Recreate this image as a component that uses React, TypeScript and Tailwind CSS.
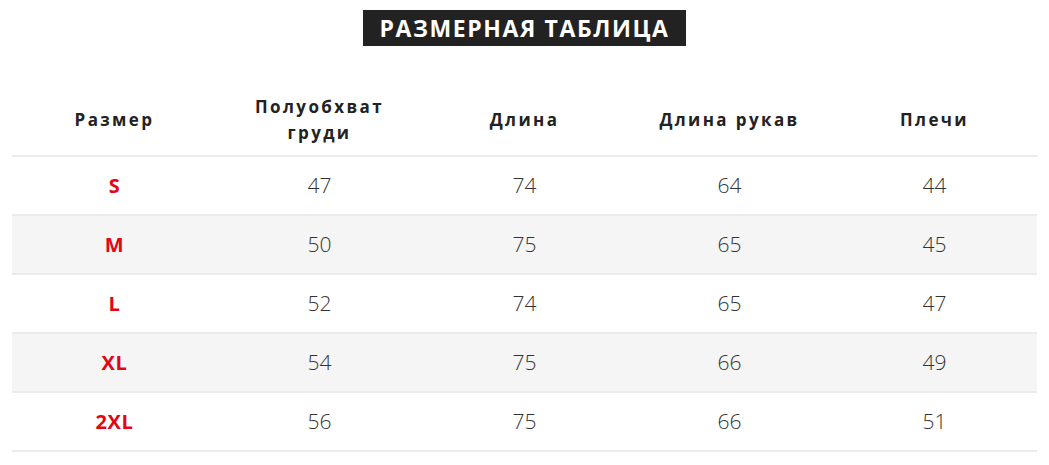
type SizeRow = {
  size: string;
  chest: number;
  length: number;
  sleeve: number;
  shoulders: number;
};

const rows: SizeRow[] = [
  { size: "S", chest: 47, length: 74, sleeve: 64, shoulders: 44 },
  { size: "M", chest: 50, length: 75, sleeve: 65, shoulders: 45 },
  { size: "L", chest: 52, length: 74, sleeve: 65, shoulders: 47 },
  { size: "XL", chest: 54, length: 75, sleeve: 66, shoulders: 49 },
  { size: "2XL", chest: 56, length: 75, sleeve: 66, shoulders: 51 },
];

const headers = ["Размер", "Полуобхват груди", "Длина", "Длина рукав", "Плечи"];

export default function App() {
  return (
    <div className="w-[1049px] h-[465px] bg-white font-['Open_Sans',sans-serif] overflow-hidden">
      <div className="flex justify-center pt-[10px]">
        <h2 className="h-[36px] px-[16px] bg-[#222222] text-white font-bold text-[23px] leading-[36px] tracking-[0.07em] uppercase">
          Размерная таблица
        </h2>
      </div>

      <table className="ml-[12px] mt-[39px] w-[1025px] table-fixed border-collapse">
        <thead>
          <tr className="border-b-2 border-[#ebebeb]">
            {headers.map((h) => (
              <th
                key={h}
                className="h-[71px] px-[20px] text-center align-middle text-[17px] leading-[26px] font-bold tracking-[0.14em] text-[#222222]"
              >
                {h}
              </th>
            ))}
          </tr>
        </thead>
        <tbody>
          {rows.map((r, i) => (
            <tr
              key={r.size}
              className={`border-b-2 border-[#ebebeb] ${i % 2 === 1 ? "bg-[#f5f5f5]" : "bg-white"}`}
            >
              <td className="h-[59px] text-center align-middle text-[20px] font-bold tracking-[0.03em] text-[#e30613]">
                {r.size}
              </td>
              {[r.chest, r.length, r.sleeve, r.shoulders].map((v, j) => (
                <td
                  key={j}
                  className="h-[59px] text-center align-middle text-[21px] font-light text-[#333333]"
                >
                  {v}
                </td>
              ))}
            </tr>
          ))}
        </tbody>
      </table>
    </div>
  );
}
